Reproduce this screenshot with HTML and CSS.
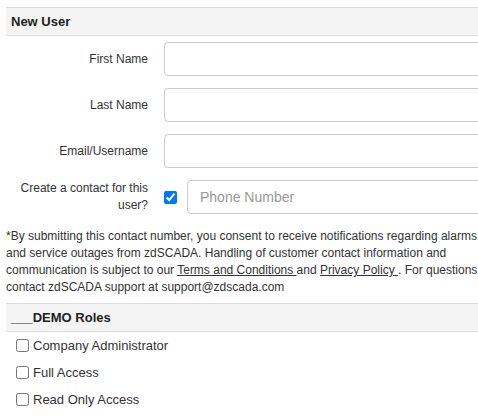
FILE: index.html
```html
<!DOCTYPE html>
<html lang="en">
<head>
    <meta charset="UTF-8">
    <title>New User</title>
    <link rel="stylesheet" href="styles.css">
</head>
<body>
    <div class="page">
        <div class="section-header">New User</div>

        <form class="user-form">
            <div class="form-row">
                <label class="form-label" for="firstName">First Name</label>
                <div class="form-field">
                    <input type="text" id="firstName" class="form-input">
                </div>
            </div>

            <div class="form-row">
                <label class="form-label" for="lastName">Last Name</label>
                <div class="form-field">
                    <input type="text" id="lastName" class="form-input">
                </div>
            </div>

            <div class="form-row">
                <label class="form-label" for="email">Email/Username</label>
                <div class="form-field">
                    <input type="text" id="email" class="form-input">
                </div>
            </div>

            <div class="form-row">
                <label class="form-label" for="createContact">Create a contact for this user?</label>
                <div class="form-field contact-field">
                    <input type="checkbox" id="createContact" class="contact-check" checked>
                    <input type="text" class="form-input" placeholder="Phone Number">
                </div>
            </div>
        </form>

        <p class="consent-text">
            *By submitting this contact number, you consent to receive notifications regarding alarms
            and service outages from zdSCADA. Handling of customer contact information and
            communication is subject to our <a href="#">Terms and Conditions </a>and <a href="#">Privacy Policy </a>. For questions
            contact zdSCADA support at support@zdscada.com
        </p>

        <div class="section-header">___DEMO Roles</div>

        <div class="role-list">
            <label class="role-option"><input type="checkbox"> Company Administrator</label>
            <label class="role-option"><input type="checkbox"> Full Access</label>
            <label class="role-option"><input type="checkbox"> Read Only Access</label>
        </div>
    </div>
</body>
</html>
```

FILE: styles.css
```css
* {
    margin: 0;
    padding: 0;
    box-sizing: border-box;
}

body {
    font-family: "Liberation Sans", Arial, sans-serif;
    color: #333;
    background: white;
    overflow: hidden;
}

.page {
    margin-left: 6px;
    margin-right: -30px;
    padding-top: 7px;
}

.section-header {
    background-color: #f4f4f4;
    border-top: 1px solid #ddd;
    border-bottom: 1px solid #ddd;
    height: 29px;
    padding: 0 5px;
    font-size: 13px;
    font-weight: bold;
    line-height: 27px;
    color: #222;
}

.user-form {
    padding-top: 6px;
    display: flex;
    flex-direction: column;
    gap: 12px;
}

.form-row {
    display: grid;
    grid-template-columns: 158px 1fr;
    align-items: center;
}

.form-label {
    font-size: 12px;
    line-height: 17px;
    text-align: right;
    padding-right: 16px;
    padding-left: 10px;
}

.form-input {
    width: 100%;
    height: 34px;
    border: 1px solid #ccc;
    border-radius: 4px;
    padding: 0 12px;
    font-family: "Liberation Sans", Arial, sans-serif;
    font-size: 14px;
    color: #333;
    background: white;
}

.form-input::placeholder {
    color: #999;
}

.contact-field {
    display: flex;
    align-items: center;
}

.contact-check {
    width: 13px;
    height: 13px;
    margin: 0 10px 0 0;
    flex-shrink: 0;
}

.consent-text {
    margin: 14px 28px 7px 0;
    font-size: 12px;
    line-height: 17px;
}

.consent-text a {
    color: #333;
    text-decoration: underline;
}

.role-list {
    padding-left: 10px;
}

.role-option {
    display: flex;
    align-items: center;
    height: 27px;
    font-size: 13px;
}

.role-option input {
    width: 13px;
    height: 13px;
    margin: 0 4px 0 0;
}
```
